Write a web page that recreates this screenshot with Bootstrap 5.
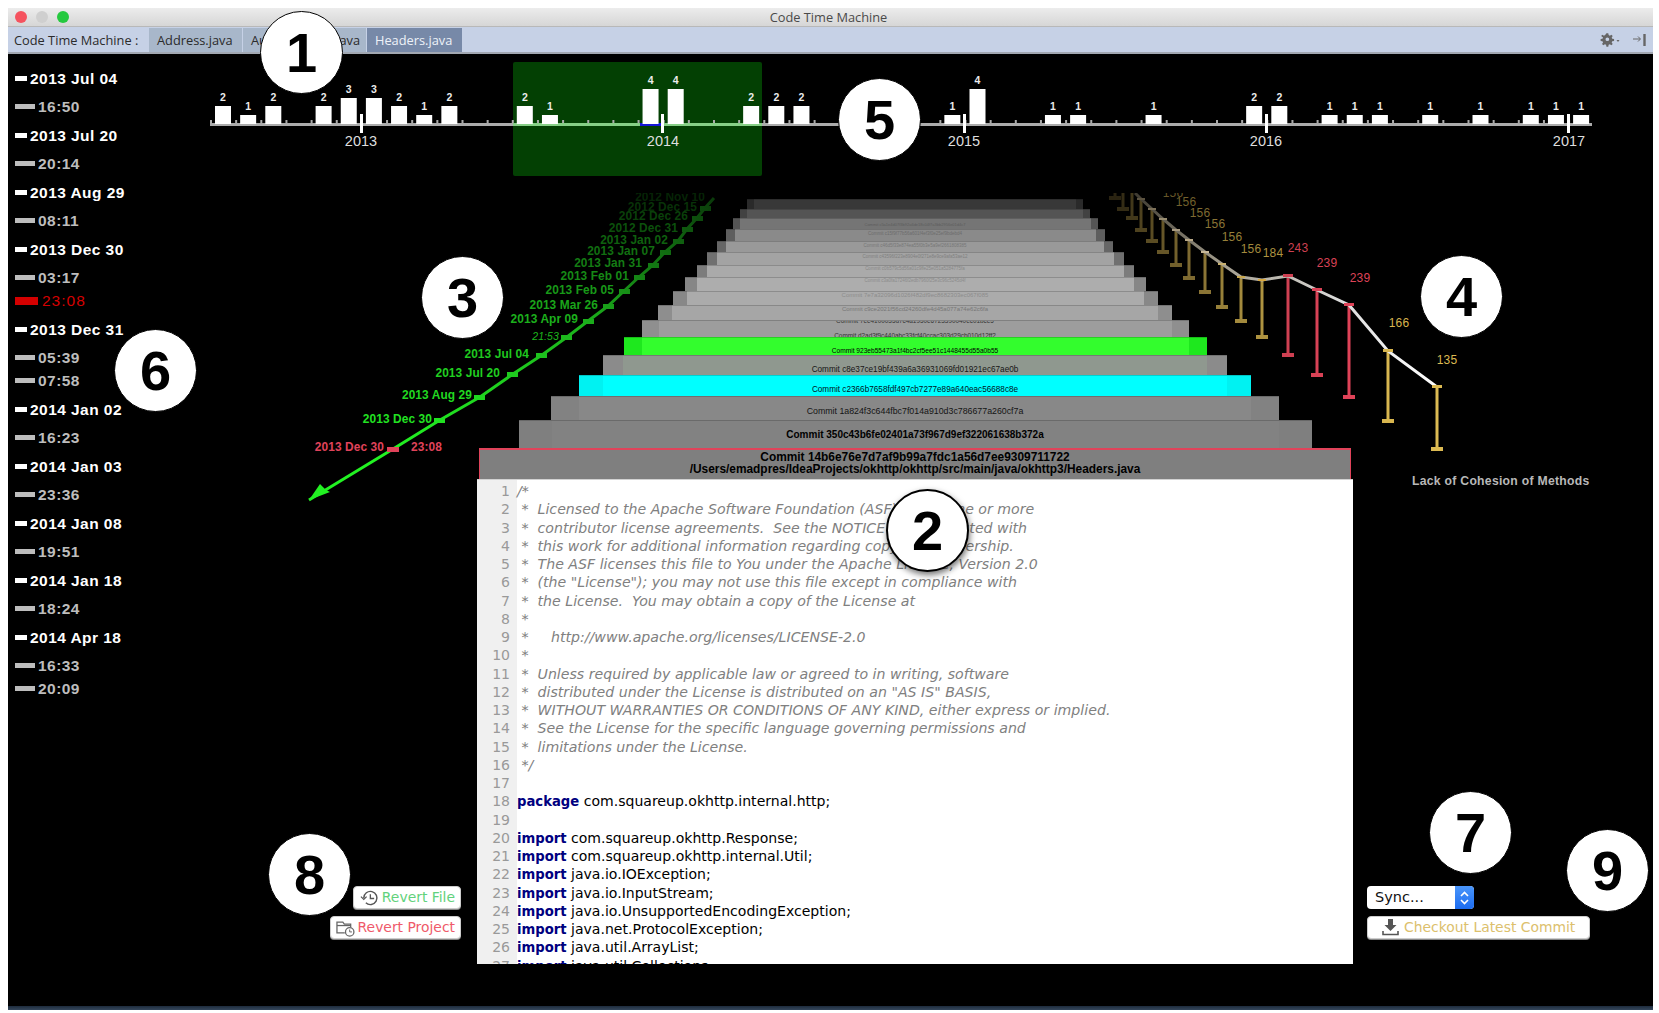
<!DOCTYPE html>
<html lang="en">
<head>
<meta charset="utf-8">
<title>Code Time Machine</title>
<link href="https://cdn.jsdelivr.net/npm/bootstrap@5.3.0/dist/css/bootstrap.min.css" rel="stylesheet">
<style>
html,body{height:100%;margin:0;background:#fff;overflow:hidden;}
body{font-family:"Open Sans","Liberation Sans",sans-serif;}
.app-window{position:absolute;left:8px;top:8px;width:1645px;height:1002px;display:flex;flex-direction:column;background:#000;}
.title-strip{height:19px;background:linear-gradient(#ececec,#d6d6d6);border-bottom:1px solid #b8b8b8;position:relative;font-size:12.8px;line-height:18px;color:#4a4a4a;text-align:center;flex:none;padding-right:4px;}
.light-group{position:absolute;left:7px;top:3px;display:flex;gap:9px;}
.light-dot{width:12px;height:12px;border-radius:50%;display:block;}
.light-r{background:#f5535f}.light-g{background:#cfcfcf}.light-v{background:#25c93f}
.tool-strip{height:27px;background:#c6d1e6;border-bottom:2px solid #a2a8b2;display:flex;align-items:stretch;font-size:12.8px;color:#2b2b2b;flex:none;padding-top:1px;}
.tool-label{padding:0 9px 0 6px;line-height:25px;width:141px;white-space:nowrap;}
.file-tab{background:#a8b7ca;line-height:25px;padding:0 8px;margin-right:1px;white-space:nowrap;}
.file-tab-a{width:93px}.file-tab-b{width:123px}
.file-tab-on{background:#7789a8;color:#eef2f8;width:95px;}
.tool-icons{margin-left:auto;display:flex;align-items:center;gap:13px;padding-right:6px;}
.work-area{flex:1;position:relative;display:flex;min-height:0;}
.date-rail{width:200px;flex:none;padding-top:10px;}
.rail-row{height:28.5px;display:flex;align-items:center;gap:3px;padding-left:7px;font-family:"Liberation Sans",sans-serif;font-weight:700;font-size:15.5px;letter-spacing:.45px;white-space:nowrap;}
.rail-tight{height:23px;margin-top:-3px;margin-bottom:3px;}
.rail-date{color:#fff;}
.rail-time{color:#bdbdbd;}
.rail-now{color:#d40000;font-weight:400;letter-spacing:1px;}
.rail-tick{display:block;height:5px;background:currentColor;flex:none;}
.rail-date .rail-tick{width:12px;}
.rail-time .rail-tick{width:20px;}
.rail-now .rail-tick{width:23px;height:8px;margin-right:1px;}
.center-area{flex:1;display:flex;flex-direction:column;min-width:0;}
.chart-top{display:block;width:1445px;height:145px;flex:none;}
.chart-top text{font-family:"Liberation Sans",sans-serif;}
.count-txt{font-size:10.5px;font-weight:700;fill:#ececec;text-anchor:middle;}
.year-txt{font-size:14.5px;fill:#dedede;text-anchor:middle;}
.mid-row{flex:1;display:flex;min-height:0;}
.left-side{width:269px;flex:none;display:flex;flex-direction:column;justify-content:flex-end;align-items:flex-end;gap:7px;padding:0 16px 67px 0;}
.stack-col{width:876px;flex:none;display:flex;flex-direction:column;align-items:center;}
.right-side{flex:1;display:flex;flex-direction:column;justify-content:flex-end;align-items:flex-start;gap:7px;padding:0 0 67px 14px;}
.plane-bar{--i:10px;flex:none;border-top:1px solid rgba(0,0,0,.18);overflow:hidden;font-family:"Liberation Sans",sans-serif;color:#000;text-align:center;white-space:nowrap;line-height:1;
background:linear-gradient(90deg,var(--o) var(--i),var(--n) var(--i),var(--n) calc(100% - var(--i)),var(--o) calc(100% - var(--i)));}
.plane-lines{display:block;line-height:14.5px;margin-top:-7px;}
.plane-head{width:872px;height:31px;flex:none;background:#7f7f7f;border:1px solid #e0435a;border-bottom:0;border-top-width:2px;font-family:"Liberation Sans",sans-serif;font-weight:700;font-size:11.9px;line-height:11.6px;text-align:center;color:#000;white-space:nowrap;padding-top:2px;}
.code-panel{width:876px;height:485px;flex:none;background:#fff;border-top:1px solid #d2d2d2;overflow:hidden;font-family:"DejaVu Sans",sans-serif;font-size:14.05px;line-height:18.25px;color:#000;padding-top:2px;background-image:linear-gradient(90deg,#f0f0f0 40px,#fff 40px);}
.code-row{display:flex;height:18.25px;white-space:pre;}
.code-no{width:33px;flex:none;text-align:right;color:#999;margin-right:7px;}
.code-cm{color:#808080;font-style:italic;font-size:14.15px;}
.code-kw{color:#000080;font-weight:700;font-size:13.2px;}
.soft-btn{background:#fff;border:1px solid #ccc;border-radius:4px;height:23px;display:flex;align-items:center;font-family:"DejaVu Sans",sans-serif;font-size:13.9px;padding:0 5px;white-space:nowrap;line-height:1;box-shadow:0 1px 0 #888;}
.revert-f{width:108px;color:#62d27c;gap:3px;padding-left:6px;}
.revert-p{width:131px;color:#ef5a6a;gap:1px;padding-left:4px;}
.checkout-b{width:223px;color:#dcc06c;gap:5px;padding-left:14px;}
.sync-box{width:107px;height:23px;background:#fff;border-radius:4px;display:flex;align-items:center;justify-content:space-between;font-family:"DejaVu Sans",sans-serif;font-size:14.5px;color:#111;padding-left:8px;overflow:hidden;}
.sync-arrows{width:19px;height:23px;background:linear-gradient(#4a96fb,#1c6cf0);display:flex;align-items:center;justify-content:center;}
.overlay-draw{position:absolute;left:0;top:0;width:1645px;height:948px;pointer-events:none;}
.overlay-draw text{font-family:"Liberation Sans",sans-serif;}
.arc-lab{font-size:11.9px;font-weight:700;text-anchor:end;letter-spacing:.1px;}
.arc-thin{font-size:10.5px;font-weight:400;font-style:italic;}
.metric-lab{font-size:12px;text-anchor:middle;letter-spacing:.1px;}
.lack-lab{font-size:12.2px;font-weight:700;fill:#b8b8b8;letter-spacing:.28px;}
.num-disc{position:absolute;width:83px;height:83px;border-radius:50%;background:#fff;color:#000;border:1px solid #000;display:flex;align-items:center;justify-content:center;font-family:"Liberation Sans",sans-serif;font-weight:700;font-size:56px;line-height:1;}
.num-1{left:252px;top:-43px}
.num-2{left:878px;top:435px;box-shadow:1px 3px 6px rgba(0,0,0,.55);border-width:2px;}
.num-3{left:413px;top:202px}
.num-4{left:1412px;top:201px}
.num-5{left:830px;top:24px}
.num-6{left:106px;top:275px}
.num-7{left:1421px;top:737px}
.num-8{left:260px;top:779px}
.num-9{left:1558px;top:775px}
.foot-shade{height:4px;flex:none;background:linear-gradient(#1d2b3c,#35475c);}
</style>
</head>
<body>
<div class="app-window">
  <div class="title-strip">
    <div class="light-group"><span class="light-dot light-r"></span><span class="light-dot light-g"></span><span class="light-dot light-v"></span></div>
    Code Time Machine
  </div>
  <div class="tool-strip">
    <div class="tool-label">Code Time Machine :</div>
    <div class="file-tab file-tab-a">Address.java</div>
    <div class="file-tab file-tab-b">Authenticator.java</div>
    <div class="file-tab file-tab-on">Headers.java</div>
    <div class="tool-icons">
      <svg width="20" height="14" viewBox="0 0 20 14" fill="#666"><path d="M7 0.5h2l.4 2 1.3.6 1.7-1.1 1.4 1.4-1.1 1.7.6 1.3 2 .4v2l-2 .4-.6 1.3 1.1 1.7-1.4 1.4-1.7-1.1-1.3.6-.4 2H7l-.4-2-1.3-.6-1.7 1.1-1.4-1.4 1.1-1.7-.6-1.3-2-.4v-2l2-.4.6-1.3L1.2 3.4 2.6 2l1.7 1.1 1.3-.6zM8 5a2 2 0 100 4 2 2 0 000-4z" transform="scale(.92) translate(0 -.2)"/><path d="M16.5 7h3l-1.5 2z"/></svg>
      <svg width="14" height="14" viewBox="0 0 14 14" fill="none" stroke="#666"><path d="M0 6h7M5 3.5L7.5 6 5 8.5"/><path d="M11.5 1v12" stroke-width="2.4"/></svg>
    </div>
  </div>
  <div class="work-area">
    <div class="date-rail">
      <div class="rail-row rail-date"><i class="rail-tick"></i>2013 Jul 04</div>
      <div class="rail-row rail-time"><i class="rail-tick"></i>16:50</div>
      <div class="rail-row rail-date"><i class="rail-tick"></i>2013 Jul 20</div>
      <div class="rail-row rail-time"><i class="rail-tick"></i>20:14</div>
      <div class="rail-row rail-date"><i class="rail-tick"></i>2013 Aug 29</div>
      <div class="rail-row rail-time"><i class="rail-tick"></i>08:11</div>
      <div class="rail-row rail-date"><i class="rail-tick"></i>2013 Dec 30</div>
      <div class="rail-row rail-time"><i class="rail-tick"></i>03:17</div>
      <div class="rail-row rail-tight rail-now"><i class="rail-tick"></i>23:08</div>
      <div class="rail-row rail-date"><i class="rail-tick"></i>2013 Dec 31</div>
      <div class="rail-row rail-time"><i class="rail-tick"></i>05:39</div>
      <div class="rail-row rail-tight rail-time"><i class="rail-tick"></i>07:58</div>
      <div class="rail-row rail-date"><i class="rail-tick"></i>2014 Jan 02</div>
      <div class="rail-row rail-time"><i class="rail-tick"></i>16:23</div>
      <div class="rail-row rail-date"><i class="rail-tick"></i>2014 Jan 03</div>
      <div class="rail-row rail-time"><i class="rail-tick"></i>23:36</div>
      <div class="rail-row rail-date"><i class="rail-tick"></i>2014 Jan 08</div>
      <div class="rail-row rail-time"><i class="rail-tick"></i>19:51</div>
      <div class="rail-row rail-date"><i class="rail-tick"></i>2014 Jan 18</div>
      <div class="rail-row rail-time"><i class="rail-tick"></i>18:24</div>
      <div class="rail-row rail-date"><i class="rail-tick"></i>2014 Apr 18</div>
      <div class="rail-row rail-time"><i class="rail-tick"></i>16:33</div>
      <div class="rail-row rail-tight rail-time"><i class="rail-tick"></i>20:09</div>
    </div>
    <div class="center-area">
      <svg class="chart-top" viewBox="208 54 1445 145">
        <rect x="513" y="62" width="249" height="114" rx="2" fill="#034003"/>
        <line x1="210" y1="124.5" x2="1592" y2="124.5" stroke="#ababab" stroke-width="3"/>
        <line x1="513" y1="124.5" x2="762" y2="124.5" stroke="#86cf86" stroke-width="3"/>
        <line x1="640" y1="124.5" x2="663" y2="124.5" stroke="#1616d6" stroke-width="3"/>
        <line x1="210" y1="121.5" x2="1592" y2="121.5" stroke="#ababab" stroke-width="3" stroke-dasharray="2 23.15"/>
        <g fill="#fff">
          <rect x="215" y="106" width="16" height="18"/><rect x="240.15" y="115" width="16" height="9"/><rect x="265.3" y="106" width="16" height="18"/>
          <rect x="315.6" y="106" width="16" height="18"/><rect x="340.75" y="98" width="16" height="26"/><rect x="365.9" y="98" width="16" height="26"/>
          <rect x="391.05" y="106" width="16" height="18"/><rect x="416.2" y="115" width="16" height="9"/><rect x="441.35" y="106" width="16" height="18"/>
          <rect x="516.8" y="106" width="16" height="18"/><rect x="541.95" y="115" width="16" height="9"/><rect x="642.55" y="89" width="16" height="35"/>
          <rect x="667.7" y="89" width="16" height="35"/><rect x="743.15" y="106" width="16" height="18"/><rect x="768.3" y="106" width="16" height="18"/>
          <rect x="793.45" y="106" width="16" height="18"/><rect x="944.35" y="115" width="16" height="9"/><rect x="969.5" y="89" width="16" height="35"/>
          <rect x="1044.95" y="115" width="16" height="9"/><rect x="1070.1" y="115" width="16" height="9"/><rect x="1145.55" y="115" width="16" height="9"/>
          <rect x="1246.15" y="106" width="16" height="18"/><rect x="1271.3" y="106" width="16" height="18"/><rect x="1321.6" y="115" width="16" height="9"/>
          <rect x="1346.75" y="115" width="16" height="9"/><rect x="1371.9" y="115" width="16" height="9"/><rect x="1422.2" y="115" width="16" height="9"/>
          <rect x="1472.5" y="115" width="16" height="9"/><rect x="1522.8" y="115" width="16" height="9"/><rect x="1547.95" y="115" width="16" height="9"/>
          <rect x="1573.1" y="115" width="16" height="9"/>
          <rect x="360" y="114" width="3" height="19"/><rect x="661" y="114" width="3" height="19"/><rect x="963" y="114" width="3" height="19"/><rect x="1265" y="114" width="3" height="19"/><rect x="1567" y="114" width="3" height="19"/>
        </g>
        <text class="count-txt" x="223" y="101">2</text><text class="count-txt" x="248.15" y="110">1</text><text class="count-txt" x="273.3" y="101">2</text>
        <text class="count-txt" x="323.6" y="101">2</text><text class="count-txt" x="348.75" y="93">3</text><text class="count-txt" x="373.9" y="93">3</text>
        <text class="count-txt" x="399.05" y="101">2</text><text class="count-txt" x="424.2" y="110">1</text><text class="count-txt" x="449.35" y="101">2</text>
        <text class="count-txt" x="524.8" y="101">2</text><text class="count-txt" x="549.95" y="110">1</text><text class="count-txt" x="650.55" y="84">4</text>
        <text class="count-txt" x="675.7" y="84">4</text><text class="count-txt" x="751.15" y="101">2</text><text class="count-txt" x="776.3" y="101">2</text>
        <text class="count-txt" x="801.45" y="101">2</text><text class="count-txt" x="952.35" y="110">1</text><text class="count-txt" x="977.5" y="84">4</text>
        <text class="count-txt" x="1052.95" y="110">1</text><text class="count-txt" x="1078.1" y="110">1</text><text class="count-txt" x="1153.55" y="110">1</text>
        <text class="count-txt" x="1254.15" y="101">2</text><text class="count-txt" x="1279.3" y="101">2</text><text class="count-txt" x="1329.6" y="110">1</text>
        <text class="count-txt" x="1354.75" y="110">1</text><text class="count-txt" x="1379.9" y="110">1</text><text class="count-txt" x="1430.2" y="110">1</text>
        <text class="count-txt" x="1480.5" y="110">1</text><text class="count-txt" x="1530.8" y="110">1</text><text class="count-txt" x="1555.95" y="110">1</text>
        <text class="count-txt" x="1581.1" y="110">1</text>
        <text class="year-txt" x="361" y="146">2013</text><text class="year-txt" x="663" y="146">2014</text><text class="year-txt" x="964" y="146">2015</text><text class="year-txt" x="1266" y="146">2016</text><text class="year-txt" x="1569" y="146">2017</text>
      </svg>
      <div class="mid-row">
        <div class="left-side">
          <div class="soft-btn revert-f">
            <svg width="20" height="18" viewBox="0 0 20 18" fill="none" stroke="#555" stroke-width="1.5"><path d="M4 9a7 7 0 112.2 5.1"/><path d="M1 7.5L4 10.5 7 7.5" stroke-width="1.3"/><path d="M11 5v4.5h4" stroke-width="1.4"/></svg>Revert File
          </div>
          <div class="soft-btn revert-p">
            <svg width="22" height="18" viewBox="0 0 22 18" fill="none" stroke="#666" stroke-width="1.3"><path d="M10 14H2V3h6l1.5 2H16v3"/><path d="M2 6.5h14"/><circle cx="15" cy="13" r="4.3" fill="#fff"/><path d="M15 10.5V13h2.3" stroke-width="1"/></svg>Revert Project
          </div>
        </div>
        <div class="stack-col">
          <div class="plane-bar" style="--o:#2a2a2a;--n:#383838;--i:7px;width:336px;height:10px"></div>
          <div class="plane-bar" style="--o:#424242;--n:#545454;--i:7px;width:350px;height:9px"></div>
          <div class="plane-bar" style="--o:#555;--n:#757575;--i:7px;width:365px;height:11px;font-size:4px;color:#5c5c5c;padding-top:4px">Commit c5a1e4d07f3b92a6de18c04f7a3bb2956e01d4c7</div>
          <div class="plane-bar" style="--o:#5e5e5e;--n:#8a8a8a;--i:9px;width:379px;height:12px;font-size:4.5px;color:#6c6c6c;padding-top:2px">Commit c15f9f77b56a601f4ef3f0e25ef9bdebd4</div>
          <div class="plane-bar" style="--o:#666;--n:#999;--i:9px;width:396px;height:11px;font-size:4.5px;color:#777;padding-top:2px">Commit c46d5f33e874ea55f0b3e5a9ef2661808385</div>
          <div class="plane-bar" style="--o:#707070;--n:#a3a3a3;--i:10px;width:417px;height:13px;font-size:4.5px;color:#808080;padding-top:2px">Commit c43596f223e8904e0f271e8e9ce9afa53ae12</div>
          <div class="plane-bar" style="--o:#7c7c7c;--n:#aaa;--i:10px;width:437px;height:12px;font-size:4.5px;color:#888;padding-top:1px">Commit c0b579c5d56a01c9ffe25e051a5284775fa</div>
          <div class="plane-bar" style="--o:#868686;--n:#adadad;--i:12px;width:461px;height:14px;font-size:4.5px;color:#8c8c8c;padding-top:1px">Commit c3a0fa17246f2edb7960f25e3c96c5245d4f</div>
          <div class="plane-bar" style="--o:#888;--n:#ababab;--i:14px;width:485px;height:14px;font-size:6px;color:#8c8c8c">Commit 7e7a32096d1026f482df9ec8682303ec067f085</div>
          <div class="plane-bar" style="--o:#8e8e8e;--n:#a6a6a6;--i:14px;width:514px;height:15px;font-size:6px;color:#777">Commit c9ce2021f56cd24260dfe4d45a077a74e62c6fa</div>
          <div class="plane-bar" style="--o:#8f8f8f;--n:#9d9d9d;--i:17px;width:547px;height:17px;font-size:6.4px;color:#333"><span class="plane-lines">Commit 7ee4100035d7c4a1950e6723390040ec01bce5<br>Commit d2ad3f9c440abc33fcf40ccac303d29cb010d12ff2</span></div>
          <div class="plane-bar" style="--o:#1ee81e;--n:#33fd2d;--i:18px;width:583px;height:18px;font-size:6.6px;padding-top:10px">Commit 923eb55473a1f4bc2cf5ee51c1448455d55a0b55</div>
          <div class="plane-bar" style="--o:#8b8b8b;--n:#8f988f;--i:20px;width:624px;height:20px;font-size:8.2px;color:#161616;padding-top:10px">Commit c8e37ce19bf439a6a36931069fd01921ec67ae0b</div>
          <div class="plane-bar" style="--o:#00f2f2;--n:#00ffff;--i:24px;width:672px;height:21px;font-size:8.2px;color:#012;padding-top:10px">Commit c2366b7658fdf497cb7277e89a640eac56688c8e</div>
          <div class="plane-bar" style="--o:#828282;--n:#888;--i:28px;width:728px;height:24px;font-size:8.8px;padding-top:10px;color:#141414">Commit 1a824f3c644fbc7f014a910d3c786677a260cf7a</div>
          <div class="plane-bar" style="--o:#7f7f7f;--n:#828282;--i:33px;width:793px;height:28px;font-size:10px;font-weight:700;padding-top:9px">Commit 350c43b6fe02401a73f967d9ef322061638b372a</div>
          <div class="plane-head">Commit 14b6e76e7d7af9b99a7fdc1a56d7ee9309711722<br>/Users/emadpres/IdeaProjects/okhttp/okhttp/src/main/java/okhttp3/Headers.java</div>
          <div class="code-panel">
            <div class="code-row"><span class="code-no">1</span><span class="code-cm">/*</span></div>
            <div class="code-row"><span class="code-no">2</span><span class="code-cm"> *  Licensed to the Apache Software Foundation (ASF) under one or more</span></div>
            <div class="code-row"><span class="code-no">3</span><span class="code-cm"> *  contributor license agreements.  See the NOTICE file distributed with</span></div>
            <div class="code-row"><span class="code-no">4</span><span class="code-cm"> *  this work for additional information regarding copyright ownership.</span></div>
            <div class="code-row"><span class="code-no">5</span><span class="code-cm"> *  The ASF licenses this file to You under the Apache License, Version 2.0</span></div>
            <div class="code-row"><span class="code-no">6</span><span class="code-cm"> *  (the "License"); you may not use this file except in compliance with</span></div>
            <div class="code-row"><span class="code-no">7</span><span class="code-cm"> *  the License.  You may obtain a copy of the License at</span></div>
            <div class="code-row"><span class="code-no">8</span><span class="code-cm"> *</span></div>
            <div class="code-row"><span class="code-no">9</span><span class="code-cm"> *     http://www.apache.org/licenses/LICENSE-2.0</span></div>
            <div class="code-row"><span class="code-no">10</span><span class="code-cm"> *</span></div>
            <div class="code-row"><span class="code-no">11</span><span class="code-cm"> *  Unless required by applicable law or agreed to in writing, software</span></div>
            <div class="code-row"><span class="code-no">12</span><span class="code-cm"> *  distributed under the License is distributed on an "AS IS" BASIS,</span></div>
            <div class="code-row"><span class="code-no">13</span><span class="code-cm"> *  WITHOUT WARRANTIES OR CONDITIONS OF ANY KIND, either express or implied.</span></div>
            <div class="code-row"><span class="code-no">14</span><span class="code-cm"> *  See the License for the specific language governing permissions and</span></div>
            <div class="code-row"><span class="code-no">15</span><span class="code-cm"> *  limitations under the License.</span></div>
            <div class="code-row"><span class="code-no">16</span><span class="code-cm"> */</span></div>
            <div class="code-row"><span class="code-no">17</span></div>
            <div class="code-row"><span class="code-no">18</span><span><span class="code-kw">package</span> com.squareup.okhttp.internal.http;</span></div>
            <div class="code-row"><span class="code-no">19</span></div>
            <div class="code-row"><span class="code-no">20</span><span><span class="code-kw">import</span> com.squareup.okhttp.Response;</span></div>
            <div class="code-row"><span class="code-no">21</span><span><span class="code-kw">import</span> com.squareup.okhttp.internal.Util;</span></div>
            <div class="code-row"><span class="code-no">22</span><span><span class="code-kw">import</span> java.io.IOException;</span></div>
            <div class="code-row"><span class="code-no">23</span><span><span class="code-kw">import</span> java.io.InputStream;</span></div>
            <div class="code-row"><span class="code-no">24</span><span><span class="code-kw">import</span> java.io.UnsupportedEncodingException;</span></div>
            <div class="code-row"><span class="code-no">25</span><span><span class="code-kw">import</span> java.net.ProtocolException;</span></div>
            <div class="code-row"><span class="code-no">26</span><span><span class="code-kw">import</span> java.util.ArrayList;</span></div>
            <div class="code-row"><span class="code-no">27</span><span><span class="code-kw">import</span> java.util.Collections;</span></div>
          </div>
        </div>
        <div class="right-side">
          <div class="sync-box">Sync...
            <span class="sync-arrows"><svg width="11" height="16" viewBox="0 0 11 16" fill="none" stroke="#fff" stroke-width="1.6"><path d="M2 6l3.5-3.5L9 6M2 10l3.5 3.5L9 10"/></svg></span>
          </div>
          <div class="soft-btn checkout-b">
            <svg width="17" height="17" viewBox="0 0 17 17"><path d="M6 0h5v6h3.5L8.5 12 2.5 6H6z" fill="#555"/><path d="M1 12v3.5h15V12" fill="none" stroke="#555" stroke-width="1.6"/></svg>Checkout Latest Commit
          </div>
        </div>
      </div>
    </div>
    <svg class="overlay-draw" viewBox="8 54 1645 948">
      <defs>
        <linearGradient id="greenFade" gradientUnits="userSpaceOnUse" x1="393" y1="449" x2="714" y2="198">
          <stop offset="0" stop-color="#22f222"/><stop offset=".55" stop-color="#1cb31c"/><stop offset=".85" stop-color="#106610"/><stop offset="1" stop-color="#0a3a0a"/>
        </linearGradient>
        <linearGradient id="railFade" gradientUnits="userSpaceOnUse" x1="1437" y1="387" x2="1135" y2="193">
          <stop offset="0" stop-color="#fff"/><stop offset=".35" stop-color="#ddd"/><stop offset=".7" stop-color="#a09a8a"/><stop offset="1" stop-color="#3e3a30"/>
        </linearGradient>
        <clipPath id="topCut"><rect x="0" y="193" width="1659" height="820"/></clipPath>
      </defs>
      <g clip-path="url(#topCut)">
        <path d="M714 198L705 208 697 218 687 229 678 241 665 252 653 265 639 277 624 291 608 306 588 321 567 337 542 355 513 374 480 397 440 420 393 449 309 500" fill="none" stroke="url(#greenFade)" stroke-width="3"/>
        <path d="M309 500l21-8-4-2-6-6z" fill="#22f222"/>
        <g fill="url(#greenFade)">
          <rect x="434" y="418" width="11" height="5"/><rect x="474" y="395" width="11" height="5"/><rect x="507" y="372" width="11" height="5"/><rect x="536" y="353" width="11" height="5"/><rect x="561" y="335" width="11" height="5"/><rect x="583" y="319" width="11" height="5"/><rect x="603" y="304" width="11" height="5"/><rect x="619" y="289" width="11" height="5"/><rect x="634" y="275" width="11" height="5"/><rect x="648" y="263" width="11" height="5"/><rect x="660" y="250" width="11" height="5"/><rect x="673" y="239" width="11" height="5"/><rect x="682" y="227" width="11" height="5"/><rect x="692" y="216" width="11" height="5"/><rect x="700" y="206" width="11" height="5"/>
        </g>
        <rect x="387" y="447" width="12" height="5" fill="#e0435a"/>
        <text class="arc-lab" x="384" y="451" fill="#e0435a">2013 Dec 30</text>
        <text class="arc-lab" x="442" y="451" fill="#e0435a">23:08</text>
        <text class="arc-lab" x="432" y="423" fill="#22e222">2013 Dec 30</text>
        <text class="arc-lab" x="472" y="399" fill="#21d921">2013 Aug 29</text>
        <text class="arc-lab" x="500" y="377" fill="#20d020">2013 Jul 20</text>
        <text class="arc-lab" x="529" y="358" fill="#1fc81f">2013 Jul 04</text>
        <text class="arc-lab arc-thin" x="559" y="340" fill="#1db81d">21:53</text>
        <text class="arc-lab" x="578" y="323" fill="#1cb01c">2013 Apr 09</text>
        <text class="arc-lab" x="598" y="309" fill="#1aa51a">2013 Mar 26</text>
        <text class="arc-lab" x="614" y="294" fill="#189818">2013 Feb 05</text>
        <text class="arc-lab" x="629" y="280" fill="#168a16">2013 Feb 01</text>
        <text class="arc-lab" x="642" y="267" fill="#147c14">2013 Jan 31</text>
        <text class="arc-lab" x="655" y="255" fill="#116e11">2013 Jan 07</text>
        <text class="arc-lab" x="668" y="244" fill="#0f600f">2013 Jan 02</text>
        <text class="arc-lab" x="678" y="232" fill="#0c500c">2012 Dec 31</text>
        <text class="arc-lab" x="688" y="220" fill="#0a400a">2012 Dec 26</text>
        <text class="arc-lab" x="697" y="211" fill="#083208">2012 Dec 15</text>
        <text class="arc-lab" x="705" y="201" fill="#062406">2012 Nov 10</text>

        <g stroke-width="3" fill="none">
          <path d="M1437 387V449" stroke="#dcba52"/><path d="M1388 351V421" stroke="#d8b64f"/><path d="M1349 305V397" stroke="#df4358"/><path d="M1317 290V375" stroke="#d94256"/><path d="M1288 276V355" stroke="#cf4052"/><path d="M1262 280V337" stroke="#ae9340"/><path d="M1241 277V321" stroke="#a38a3d"/><path d="M1222 264V307" stroke="#978039"/><path d="M1205 252V292" stroke="#8a7435"/><path d="M1189 240V278" stroke="#7e6a31"/><path d="M1176 230V265" stroke="#72602c"/><path d="M1163 219V252" stroke="#665628"/><path d="M1152 209V241" stroke="#5a4c23"/><path d="M1141 199V230" stroke="#4e421f"/><path d="M1132 193V218" stroke="#42381a"/><path d="M1123 193V209" stroke="#342c15"/><path d="M1115 193V198" stroke="#2a2311"/>
        </g>
        <rect x="1431" y="447" width="12" height="4" fill="#dcba52"/><rect x="1382" y="419" width="12" height="4" fill="#d8b64f"/><rect x="1343" y="395" width="12" height="4" fill="#df4358"/><rect x="1311" y="373" width="12" height="4" fill="#d94256"/><rect x="1282" y="353" width="12" height="4" fill="#cf4052"/><rect x="1256" y="335" width="12" height="4" fill="#ae9340"/><rect x="1235" y="319" width="12" height="4" fill="#a38a3d"/><rect x="1216" y="305" width="12" height="4" fill="#978039"/><rect x="1199" y="290" width="12" height="4" fill="#8a7435"/><rect x="1183" y="276" width="12" height="4" fill="#7e6a31"/><rect x="1170" y="263" width="12" height="4" fill="#72602c"/><rect x="1157" y="250" width="12" height="4" fill="#665628"/><rect x="1146" y="239" width="12" height="4" fill="#5a4c23"/><rect x="1135" y="228" width="12" height="4" fill="#4e421f"/><rect x="1126" y="216" width="12" height="4" fill="#42381a"/><rect x="1117" y="207" width="12" height="4" fill="#342c15"/><rect x="1109" y="196" width="12" height="4" fill="#2a2311"/>
        <path d="M1437 387L1388 351 1349 305 1317 290 1288 276 1262 280 1241 277 1222 264 1205 252 1189 240 1176 230 1163 219 1152 209 1141 199 1135 193" fill="none" stroke="url(#railFade)" stroke-width="3"/>
        <g>
          <rect x="1432" y="385" width="10" height="3" fill="#dcba52"/><rect x="1383" y="349" width="10" height="3" fill="#d8b64f"/><rect x="1344" y="303" width="10" height="3" fill="#df4358"/><rect x="1312" y="288" width="10" height="3" fill="#d94256"/><rect x="1283" y="274" width="10" height="3" fill="#cf4052"/><rect x="1258" y="279" width="8" height="2" fill="#d8a840"/><rect x="1237" y="276" width="8" height="2" fill="#c8a850"/><rect x="1218" y="263" width="8" height="2" fill="#c8b070"/><rect x="1201" y="251" width="8" height="2" fill="#c8b898"/><rect x="1185" y="239" width="8" height="2" fill="#b8a888"/><rect x="1172" y="229" width="8" height="2" fill="#a89a80"/><rect x="1159" y="218" width="8" height="2" fill="#988c70"/><rect x="1148" y="208" width="8" height="2" fill="#7c7058"/><rect x="1137" y="198" width="8" height="2" fill="#5c5340"/>
        </g>
        <text class="metric-lab" x="1447" y="364" fill="#dcba52">135</text>
        <text class="metric-lab" x="1399" y="327" fill="#d8b64f">166</text>
        <text class="metric-lab" x="1360" y="282" fill="#df4358">239</text>
        <text class="metric-lab" x="1327" y="267" fill="#d94256">239</text>
        <text class="metric-lab" x="1298" y="252" fill="#cf4052">243</text>
        <text class="metric-lab" x="1273" y="257" fill="#ae9340">184</text>
        <text class="metric-lab" x="1251" y="253" fill="#a38a3d">156</text>
        <text class="metric-lab" x="1232" y="241" fill="#978039">156</text>
        <text class="metric-lab" x="1215" y="228" fill="#8a7435">156</text>
        <text class="metric-lab" x="1200" y="217" fill="#7e6a31">156</text>
        <text class="metric-lab" x="1186" y="206" fill="#72602c">156</text>
        <text class="metric-lab" x="1173" y="197" fill="#665628">156</text>
      </g>
      <text class="lack-lab" x="1412" y="485">Lack of Cohesion of Methods</text>
    </svg>
    <div class="num-disc num-1">1</div>
    <div class="num-disc num-2">2</div>
    <div class="num-disc num-3">3</div>
    <div class="num-disc num-4">4</div>
    <div class="num-disc num-5">5</div>
    <div class="num-disc num-6">6</div>
    <div class="num-disc num-7">7</div>
    <div class="num-disc num-8">8</div>
    <div class="num-disc num-9">9</div>
  </div>
  <div class="foot-shade"></div>
</div>
<script src="https://cdn.jsdelivr.net/npm/bootstrap@5.3.0/dist/js/bootstrap.bundle.min.js"></script>
</body>
</html>
